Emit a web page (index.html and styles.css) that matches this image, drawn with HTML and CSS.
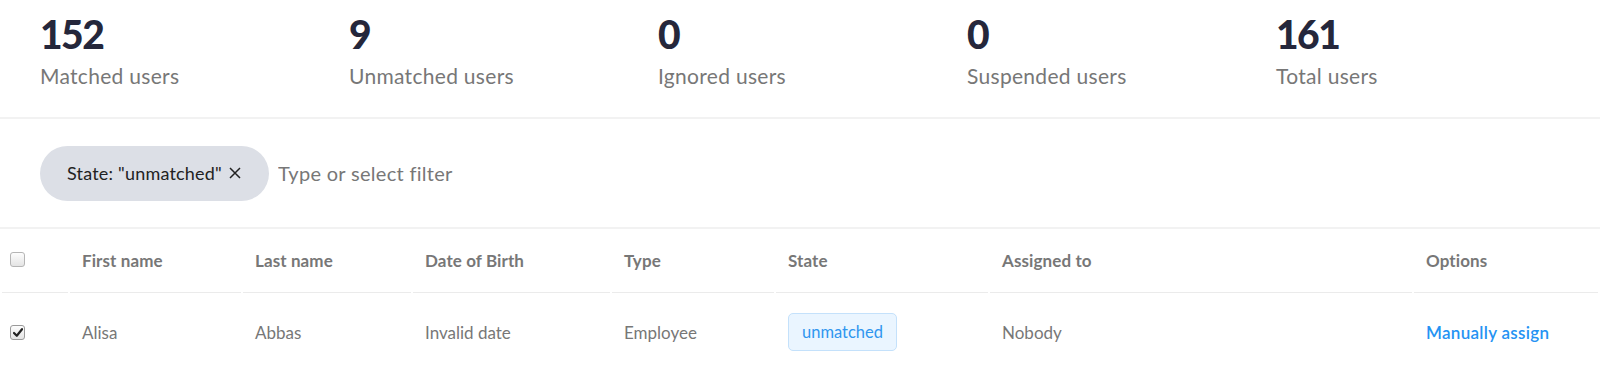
FILE: index.html
```html
<!DOCTYPE html>
<html>
<head>
<link rel="stylesheet" href="styles.css">
</head>
<body>
<div class="stats">
  <div class="stat">
    <div class="num">152</div>
    <div class="label">Matched users</div>
  </div>
  <div class="stat">
    <div class="num">9</div>
    <div class="label">Unmatched users</div>
  </div>
  <div class="stat">
    <div class="num">0</div>
    <div class="label">Ignored users</div>
  </div>
  <div class="stat">
    <div class="num">0</div>
    <div class="label">Suspended users</div>
  </div>
  <div class="stat">
    <div class="num">161</div>
    <div class="label">Total users</div>
  </div>
</div>

<div class="filters">
  <span class="chip">State: "unmatched"
    <svg class="chip-x" width="12" height="12" viewBox="0 0 12 12"><path d="M1 1 L11 11 M11 1 L1 11" stroke="#222" stroke-width="1.5" fill="none"/></svg>
  </span>
  <input class="filter-input" type="text" placeholder="Type or select filter">
</div>

<table class="users">
  <thead>
    <tr>
      <th class="c-check"><span class="box"></span></th>
      <th class="c-first">First name</th>
      <th class="c-last">Last name</th>
      <th class="c-dob">Date of Birth</th>
      <th class="c-type">Type</th>
      <th class="c-state">State</th>
      <th class="c-assigned">Assigned to</th>
      <th class="c-options">Options</th>
    </tr>
  </thead>
  <tbody>
    <tr>
      <td><span class="box checked"><svg width="10" height="9" viewBox="0 0 10 9"><path d="M1 5 L3.8 7.8 L9 1.2" fill="none" stroke="#222" stroke-width="2.2" stroke-linecap="round" stroke-linejoin="round"/></svg></span></td>
      <td>Alisa</td>
      <td>Abbas</td>
      <td>Invalid date</td>
      <td>Employee</td>
      <td><span class="badge">unmatched</span></td>
      <td>Nobody</td>
      <td><a class="link" href="#">Manually assign</a></td>
    </tr>
  </tbody>
</table>
</body>
</html>
```

FILE: styles.css
```css
body {
  margin: 0;
  font-family: Lato, "Open Sans", sans-serif;
  background: #fff;
  color: #777;
}

/* Счётчики сверху */
.stats {
  display: grid;
  grid-template-columns: repeat(5, 309px);
  padding: 12px 40px 0;
  height: 105px;
  border-bottom: 2px solid #f2f2f2;
}

.num {
  font-size: 39px;
  font-weight: 900;
  color: #25273b;
  line-height: 44px;
  letter-spacing: -1.5px;
}

.label {
  margin-top: 7px;
  font-size: 21px;
  letter-spacing: 0.3px;
  color: #777;
}

/* Фильтр */
.filters {
  display: flex;
  align-items: center;
  gap: 7px;
  height: 108px;
  padding-left: 40px;
  border-bottom: 2px solid #f2f2f2;
}

.chip {
  display: inline-flex;
  align-items: center;
  height: 55px;
  padding: 0 28px 0 27px;
  border-radius: 28px;
  background: #dcdfe6;
  color: #222;
  font-size: 18px;
  letter-spacing: 0.2px;
}

.chip-x {
  margin-left: 7px;
}

.filter-input {
  border: none;
  outline: none;
  font-family: inherit;
  font-size: 20px;
  letter-spacing: 0.3px;
  color: #333;
  width: 300px;
}

.filter-input::placeholder {
  color: #777;
}

/* Таблица */
.users {
  border-collapse: separate;
  border-spacing: 2px 0;
  table-layout: fixed;
  width: 1600px;
}

.users th {
  height: 63px;
  text-align: left;
  font-size: 17px;
  font-weight: 700;
  letter-spacing: 0.1px;
  color: #777;
  border-bottom: 1px solid #ebebeb;
  padding: 0 0 0 12px;
}

.users td {
  height: 78px;
  font-size: 17px;
  color: #777;
  padding: 0 0 0 12px;
}

.users .c-check { width: 58px; padding-left: 8px; }
.users .c-first { width: 159px; }
.users .c-last { width: 156px; }
.users .c-dob { width: 185px; }
.users .c-type { width: 150px; }
.users .c-state { width: 200px; }
.users .c-assigned { width: 410px; }
.users .c-options { width: 172px; }

.users td:first-child {
  padding-left: 8px;
}

.box {
  display: inline-flex;
  align-items: center;
  justify-content: center;
  width: 13px;
  height: 13px;
  border: 1px solid #b5b5b5;
  border-radius: 3px;
  background: linear-gradient(#fdfdfd, #e4e4e4);
  vertical-align: middle;
  position: relative;
  top: -3px;
}

.box.checked {
  border-color: #9a9a9a;
  top: -2px;
}

.badge {
  display: inline-block;
  padding: 8px 13px;
  border: 1px solid #c4e1fb;
  border-radius: 5px;
  background: #eaf5ff;
  color: #2f96ef;
  font-size: 16.5px;
}

.link {
  color: #2593f3;
  text-decoration: none;
  font-weight: 600;
  letter-spacing: 0.3px;
}
```
